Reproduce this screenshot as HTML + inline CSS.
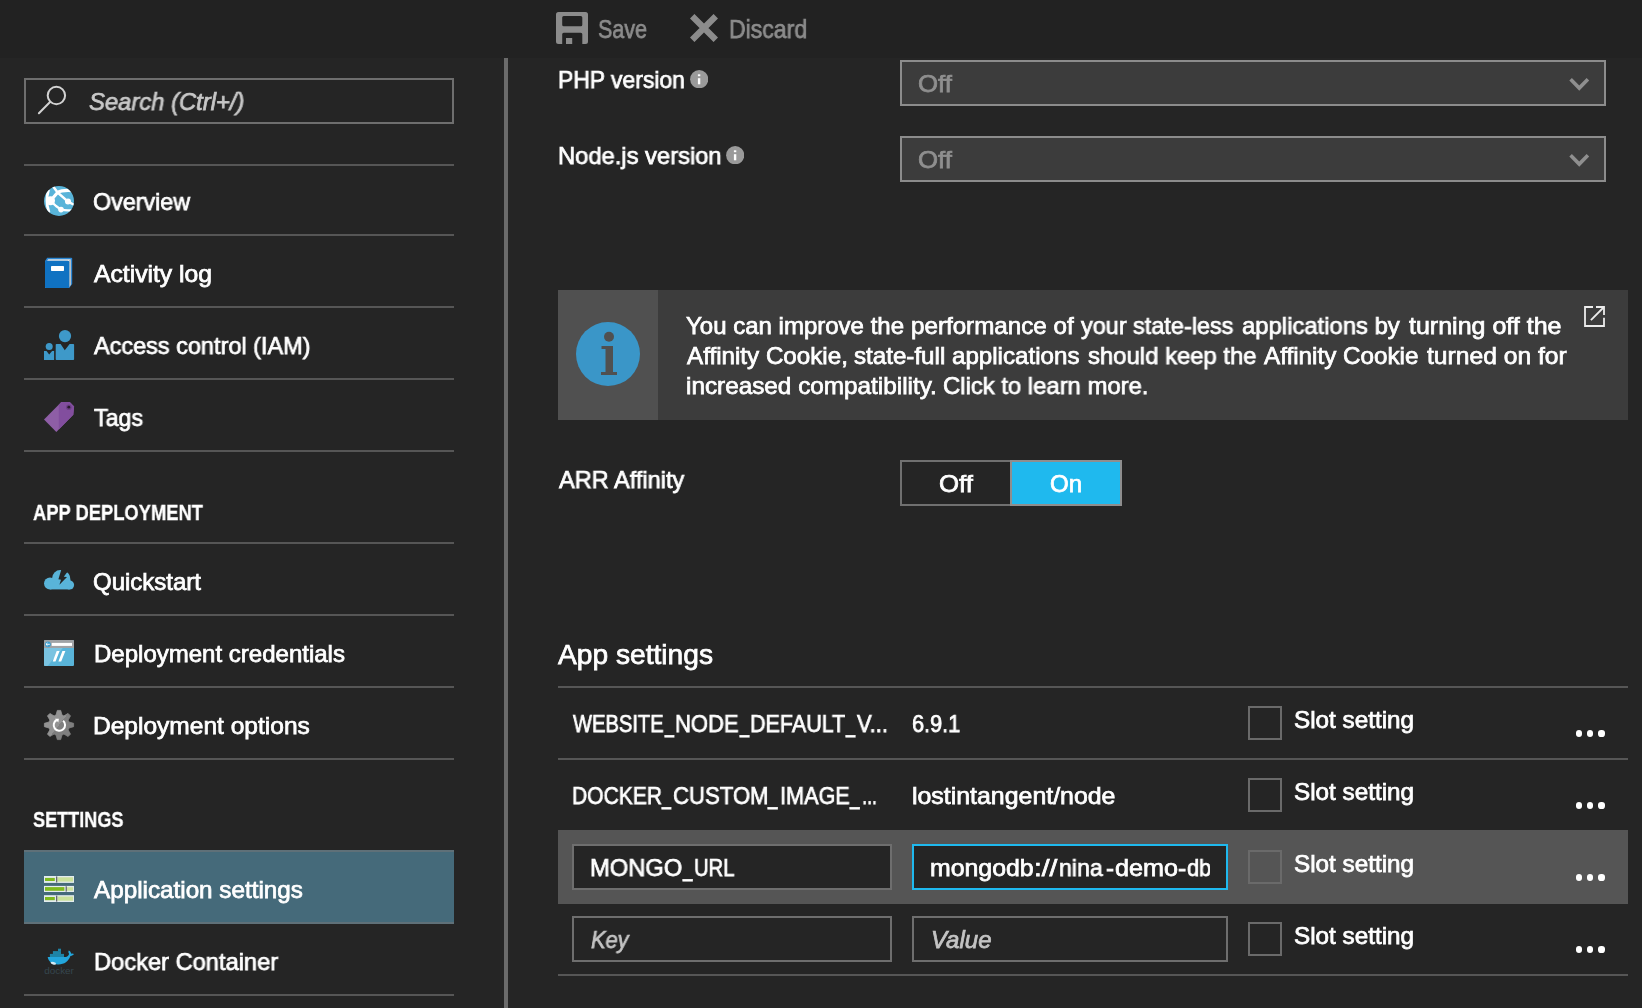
<!DOCTYPE html>
<html lang="en">
<head>
<meta charset="utf-8">
<title>Application settings</title>
<style>
*{box-sizing:border-box;margin:0;padding:0}
html,body{width:1642px;height:1008px;overflow:hidden;background:#252525}
body{position:relative;font-family:"Liberation Sans",sans-serif;color:#fff}
.abs,.t,.sep,.box,svg{position:absolute}
.t{white-space:nowrap;transform-origin:0 50%;display:block;will-change:transform;-webkit-text-stroke:.75px}
.t.i{font-style:italic}
.t.b{font-weight:bold;-webkit-text-stroke:.3px}
.sep{height:2px;background:#565656}
#topbar{left:0;top:0;width:1642px;height:58px;background:#222222}
#vdiv{left:504px;top:58px;width:4px;height:950px;background:#6b6b6b}
.side .sep{left:24px;width:430px}
.main .sep{left:558px;width:1070px}
#search{left:24px;top:78px;width:430px;height:46px;border:2px solid #6e6e6e}
#selected{left:24px;top:850px;width:430px;height:74px;background:#456a7a;border-top:2px solid #5f7078;border-bottom:2px solid #5f7078}
.dd{left:900px;width:706px;height:46px;background:#3c3c3c;border:2px solid #8c8c8c}
#info{left:558px;top:290px;width:1070px;height:130px;background:#3c3c3c}
#infoicon{left:558px;top:290px;width:100px;height:130px;background:#505050}
#tog-off{left:900px;top:460px;width:112px;height:46px;border:2px solid #707070;background:#252525}
#tog-on{left:1010px;top:460px;width:112px;height:46px;border:2px solid #8e8e8e;background:#1fb9ee}
#hl{left:558px;top:830px;width:1070px;height:74px;background:#555555}
.inp{height:46px;border:2px solid #6e6e6e;background:#252525}
.inp.k{left:572px;width:320px}
.inp.v{left:912px;width:316px}
.inp.f{border-color:#1fb9ee}
.cb{left:1248px;width:34px;height:34px;border:2px solid #6a6a6a}
.dots{width:6.200px;height:6.200px;border-radius:50%;background:#fff}
</style>
</head>
<body>

<!-- ===== command bar ===== -->
<div id="topbar" class="abs"></div>
<svg style="left:556px;top:12px" width="32" height="32" viewBox="556 12 32 32"><path fill="#8c8c8c" fill-rule="evenodd" d="M558.5 12h27a2.500 2.500 0 0 1 2.500 2.500v27a2.500 2.500 0 0 1-2.500 2.500h-3.200V34.300a1.500 1.500 0 0 0-1.500-1.500h-17.100a1.500 1.500 0 0 0-1.500 1.500V44H558.500a2.500 2.500 0 0 1-2.500-2.500v-27a2.500 2.500 0 0 1 2.500-2.500zM563.700 16h17.100a1.500 1.500 0 0 1 1.500 1.500v7.300a1.500 1.500 0 0 1-1.500 1.500h-17.100a1.500 1.500 0 0 1-1.500-1.500v-7.300a1.500 1.500 0 0 1 1.500-1.500z"/><rect x="566" y="38" width="6.200" height="6" fill="#8c8c8c"/></svg>
<span class="t" style="left:598.04px;top:12.99px;font-size:26px;line-height:32px;color:#8c8c8c;transform:scaleX(0.8281)">Save</span>
<svg style="left:690px;top:14px" width="28" height="28" viewBox="690 14 28 28"><path fill="none" stroke="#8c8c8c" stroke-width="6.300" d="M692.200 16.200l23.600 23.600M715.800 16.200l-23.600 23.600"/></svg>
<span class="t" style="left:728.97px;top:12.99px;font-size:26px;line-height:32px;color:#8c8c8c;transform:scaleX(0.8866)">Discard</span>

<!-- ===== resource menu (left) ===== -->
<div class="side">
  <div id="search" class="abs"></div>
  <svg style="left:36px;top:84px" width="32" height="32" viewBox="36 84 32 32" fill="none" stroke="#d2d2d2" stroke-width="2"><circle cx="56.400" cy="95.500" r="8.700"/><path d="M50.300 101.700L38.900 113.200" stroke-linecap="round"/></svg>
  <span class="t i" style="left:88.95px;top:86.68px;font-size:24px;line-height:30px;color:#c8c8c8;transform:scaleX(0.9914)">Search (Ctrl+/)</span>

  <div class="sep" style="top:164px"></div>
  <svg style="left:44px;top:186px" width="30" height="30" viewBox="44 186 30 30"><defs><clipPath id="gc"><circle cx="59" cy="201" r="15"/></clipPath></defs><circle cx="59" cy="201" r="15" fill="#59b4d9"/><g clip-path="url(#gc)" fill="none" stroke="#fff" stroke-linecap="round" stroke-linejoin="round"><path stroke-width="2.400" d="M52.800 186l4.800 6.500L68 201.600l6.500 3.400"/><path stroke-width="3.200" d="M50.500 200.800l7.100-8.300c3-1.700 7.500-2.400 14.400-1.900"/><path stroke-width="2.400" d="M50.500 200.800l5.500 5.200 5 3.600c3 .8 7 1 12 .5"/><path stroke-width="2.800" d="M48.400 190.300Q45.300 201 48.800 211.700"/><g fill="#fff" stroke="none"><circle cx="50.500" cy="200.800" r="4.500"/><circle cx="68" cy="201.600" r="3"/><circle cx="61" cy="209.600" r="2.800"/></g></g></svg>
  <span class="t" style="left:93.47px;top:186.68px;font-size:24px;line-height:30px;color:#ffffff;transform:scaleX(0.9704)">Overview</span>
  <div class="sep" style="top:234px"></div>
  <svg style="left:44px;top:257px" width="30" height="32" viewBox="44 257 30 32"><path fill="#2a86d4" d="M47.200 257.800h24a1 1 0 0 1 1 1v25.200l-3 4.100H45v-27z"/><path fill="#e4e4e4" d="M47 261l1.200-1.800h22.700L69.200 261z"/><path fill="#c6c6c6" d="M69.200 261l1.700-1.800v25.600l-1.700 2.400z"/><rect x="45" y="260.800" width="24.200" height="27.300" rx="1.600" fill="#1072c2"/><rect x="51" y="266" width="13" height="5" rx=".7" fill="#fff"/></svg>
  <span class="t" style="left:94.27px;top:258.68px;font-size:24px;line-height:30px;color:#ffffff;transform:scaleX(1.0289)">Activity log</span>
  <div class="sep" style="top:306px"></div>
  <svg style="left:44px;top:329px" width="31" height="32" viewBox="44 329 31 32" fill="#3e99c9"><circle cx="65" cy="336.100" r="6.150"/><path d="M56.500 344h4.100l4.200 6.200 4.800-6.200h3.700a.8.8 0 0 1 .8.800v14.500a.8.8 0 0 1-.8.800H56.500a.8.8 0 0 1-.8-.8V344.800a.8.8 0 0 1 .8-.8z"/><circle cx="49.200" cy="346.400" r="3.500"/><path d="M44 351h2.500l2.700 3.600 2.900-3.600h2v9.100H44z"/></svg>
  <span class="t" style="left:94.27px;top:330.68px;font-size:24px;line-height:30px;color:#ffffff;transform:scaleX(0.9775)">Access control (IAM)</span>
  <div class="sep" style="top:378px"></div>
  <svg style="left:44px;top:401px" width="31" height="32" viewBox="44 401 31 32"><path fill="#8e5ea6" d="M44 419.600L61.400 402.100h8.350l4.350 4.400-.8 8.200-17 17.200z"/><path fill="#824e9e" d="M58.800 404.700l2.600-2.600h8.350l4.350 4.400-.8 8.200-14.500 14.700z"/><circle cx="68.800" cy="407.200" r="2.800" fill="#6e4088"/><circle cx="68.800" cy="407.200" r="1.400" fill="#2a1a2e"/></svg>
  <span class="t" style="left:93.93px;top:402.68px;font-size:24px;line-height:30px;color:#ffffff;transform:scaleX(0.9669)">Tags</span>
  <div class="sep" style="top:450px"></div>

  <span class="t b" style="left:33.18px;top:498.88px;font-size:22px;line-height:28px;color:#ffffff;transform:scaleX(0.8340)">APP DEPLOYMENT</span>
  <div class="sep" style="top:542px"></div>
  <svg style="left:44px;top:568px" width="31" height="23" viewBox="44 568 31 23"><g fill="#59b4d9"><circle cx="50" cy="583.400" r="6"/><circle cx="60.300" cy="578.300" r="8.200"/><circle cx="69.600" cy="585" r="4.500"/><rect x="50" y="583" width="19.600" height="6.400"/><path d="M66.900 572.300c1.500 1 2.600 2.400 3 4.200l.9 5.500-10.800 4 3-9z"/></g><path fill="#252525" d="M61.500 569l-3.100 10.250 2.600.4-1.600 5.150 7.600-7.700-3.200-.4 3.100-4.300V569z"/></svg>
  <span class="t" style="left:93.40px;top:566.68px;font-size:24px;line-height:30px;color:#ffffff;transform:scaleX(0.9985)">Quickstart</span>
  <div class="sep" style="top:614px"></div>
  <svg style="left:44px;top:640px" width="30.100" height="26" viewBox="44 640 30.100 26"><rect x="44" y="640" width="30.100" height="26" rx="1.200" fill="#59b4d9"/><path d="M44 648h18.800L47.500 666h-2.300a1.200 1.200 0 0 1-1.200-1.200z" fill="#7ac3e1"/><path d="M45.200 640h27.700a1.200 1.200 0 0 1 1.200 1.200V648H44v-6.800a1.200 1.200 0 0 1 1.200-1.200z" fill="#a0a3a6"/><rect x="51.700" y="642.900" width="20.300" height="3" fill="#fff"/><circle cx="47.900" cy="644.300" r="2.900" fill="#3e9fd0"/><path d="M46 644.300h3.800M47.500 642.900l-1.500 1.400 1.500 1.400" stroke="#fff" stroke-width=".9" fill="none"/><path d="M52.700 661.400h2.800l4.100-10.400h-2.900zM58.400 661.400h2.800l4.200-10.400h-3z" fill="#fff"/></svg>
  <span class="t" style="left:93.51px;top:638.68px;font-size:24px;line-height:30px;color:#ffffff;transform:scaleX(1.0007)">Deployment credentials</span>
  <div class="sep" style="top:686px"></div>
  <svg style="left:43px;top:709px" width="32" height="32" viewBox="43 709 32 32"><defs><linearGradient id="gg" gradientUnits="userSpaceOnUse" x1="51.500" y1="718.400" x2="67.300" y2="730.600"><stop offset=".5" stop-color="#939393"/><stop offset=".5" stop-color="#7f7f7f"/></linearGradient></defs><g fill="url(#gg)"><path stroke="url(#gg)" stroke-width=".8" stroke-linejoin="round" d="M56.00 715.10L57.30 710.40L60.70 710.40L62.00 715.10L63.88 715.88L68.12 713.47L70.53 715.88L68.12 720.12L68.90 722.00L73.60 723.30L73.60 726.70L68.90 728.00L68.12 729.88L70.53 734.12L68.12 736.53L63.88 734.12L62.00 734.90L60.70 739.60L57.30 739.60L56.00 734.90L54.12 734.12L49.88 736.53L47.47 734.12L49.88 729.88L49.10 728.00L44.40 726.70L44.40 723.30L49.10 722.00L49.88 720.12L47.47 715.88L49.88 713.47L54.12 715.88z"/><circle cx="59" cy="725" r="10"/></g><path d="M63.100 720.700a5.700 5.700 0 1 1-6.400-.7" fill="none" stroke="#fff" stroke-width="2"/><path d="M55 718.800l3.900-.1-.6 3.800z" fill="#fff"/></svg>
  <span class="t" style="left:93.49px;top:710.68px;font-size:24px;line-height:30px;color:#ffffff;transform:scaleX(1.0222)">Deployment options</span>
  <div class="sep" style="top:758px"></div>

  <span class="t b" style="left:33.10px;top:806.38px;font-size:22px;line-height:28px;color:#ffffff;transform:scaleX(0.8227)">SETTINGS</span>
  <div id="selected" class="abs"></div>
  <svg style="left:44px;top:876px" width="30.100" height="26" viewBox="44 876 30.100 26"><rect x="44" y="876" width="30.100" height="6.9" fill="#e3ecef"/><rect x="45" y="877.9" width="9.8" height="3.1" fill="#7fba1e"/><rect x="57.4" y="877.3" width="15.7" height="4.3" fill="#cbe29b"/><rect x="56.0" y="876.4" width="1.300" height="6.1" fill="#66696b"/><rect x="44" y="885.9" width="30.100" height="6.1" fill="#e3ecef"/><rect x="45" y="887.1" width="19.4" height="3.7" fill="#7fba1e"/><rect x="67.0" y="887.2" width="6.1" height="3.5" fill="#cbe29b"/><rect x="65.6" y="886.3" width="1.300" height="5.3" fill="#66696b"/><rect x="44" y="895.2" width="30.100" height="6.8" fill="#e3ecef"/><rect x="45" y="897.0" width="9.8" height="3.2" fill="#7fba1e"/><rect x="57.4" y="896.5" width="15.7" height="4.2" fill="#cbe29b"/><rect x="56.0" y="895.6" width="1.300" height="6.0" fill="#66696b"/></svg>
  <span class="t" style="left:94.28px;top:874.68px;font-size:24px;line-height:30px;color:#ffffff;transform:scaleX(1.0101)">Application settings</span>
  <svg style="left:43px;top:947px" width="32" height="28" viewBox="43 947 32 28"><g fill="#1e84a6"><rect x="49.900" y="953.900" width="14.100" height="3.200"/><rect x="52.900" y="951.100" width="8.100" height="3"/><rect x="58" y="948.700" width="3" height="2.600"/></g><path fill="#23a6dc" d="M47.700 956.900h18.300c1.700-.3 2.900-1.500 3.100-3.100-.8-1-.9-2.300-.3-3.400 1.300.6 2.200 1.900 2.300 3.300 1.200-.3 2.200-.1 2.900.4-.8 1.300-2.100 1.900-3.600 1.800-1.900 5.400-6 8.300-11.900 8.500-6 .2-10.300-3-10.800-7.500z"/><ellipse cx="53.300" cy="963.300" rx="2.800" ry="1.300" fill="#d4ecf6" transform="rotate(14 53.300 963.300)"/><text x="44.200" y="973.500" font-family="Liberation Sans,sans-serif" font-size="9.500" textLength="29.700" lengthAdjust="spacingAndGlyphs" fill="#35454e">docker</text></svg>
  <span class="t" style="left:94.03px;top:946.68px;font-size:24px;line-height:30px;color:#ffffff;transform:scaleX(0.9860)">Docker Container</span>
  <div class="sep" style="top:994px"></div>
</div>

<div id="vdiv" class="abs"></div>

<!-- ===== blade content (right) ===== -->
<div class="main">
  <span class="t" style="left:557.56px;top:64.68px;font-size:24px;line-height:30px;color:#ffffff;transform:scaleX(0.9545)">PHP version</span>
  <svg style="left:689.9px;top:69.8px" width="18.400" height="18.400" viewBox="0 0 18.400 18.400"><circle cx="9.200" cy="9.200" r="9.100" fill="#9a9a9a"/><rect x="7.900" y="4.300" width="2.400" height="1.900" fill="#fff"/><rect x="7.900" y="8.200" width="2.400" height="6.100" fill="#fff"/></svg>
  <div class="dd abs" style="top:60px"></div>
  <span class="t" style="left:917.72px;top:68.68px;font-size:24px;line-height:30px;color:#8f8f8f;transform:scaleX(1.0737)">Off</span>
  <svg style="left:1566px;top:74px" width="26" height="20" viewBox="1566 74 26 20"><path d="M1570.600 79.300l8.650 8.800 8.650-8.800" fill="none" stroke="#8f8f8f" stroke-width="3.600"/></svg>

  <span class="t" style="left:557.53px;top:140.68px;font-size:24px;line-height:30px;color:#ffffff;transform:scaleX(0.9886)">Node.js version</span>
  <svg style="left:725.9px;top:145.8px" width="18.400" height="18.400" viewBox="0 0 18.400 18.400"><circle cx="9.200" cy="9.200" r="9.100" fill="#9a9a9a"/><rect x="7.900" y="4.300" width="2.400" height="1.900" fill="#fff"/><rect x="7.900" y="8.200" width="2.400" height="6.100" fill="#fff"/></svg>
  <div class="dd abs" style="top:136px"></div>
  <span class="t" style="left:917.72px;top:144.68px;font-size:24px;line-height:30px;color:#8f8f8f;transform:scaleX(1.0737)">Off</span>
  <svg style="left:1566px;top:150px" width="26" height="20" viewBox="1566 74 26 20"><path d="M1570.600 79.300l8.650 8.800 8.650-8.800" fill="none" stroke="#8f8f8f" stroke-width="3.600"/></svg>

  <div id="info" class="abs"></div>
  <div id="infoicon" class="abs"></div>
  <svg style="left:576px;top:322px" width="64" height="64" viewBox="576 322 64 64"><circle cx="608" cy="354" r="32" fill="#3a96c8"/><circle cx="609" cy="336.750" r="5" fill="#505050"/><path d="M601.500 346H613v26h4v3h-16v-3h4.500v-23h-4z" fill="#505050"/></svg>
  <span class="t" style="left:686.11px;top:310.68px;font-size:24px;line-height:30px;color:#ffffff;transform:scaleX(1.0004)">You can improve the</span><span class="t" style="left:910.87px;top:310.68px;font-size:24px;line-height:30px;color:#ffffff;transform:scaleX(1.0074)">performance of</span><span class="t" style="left:1081.37px;top:310.68px;font-size:24px;line-height:30px;color:#ffffff;transform:scaleX(0.9765)">your state-less</span><span class="t" style="left:1242.35px;top:310.68px;font-size:24px;line-height:30px;color:#ffffff;transform:scaleX(0.9932)">applications by</span><span class="t" style="left:1408.84px;top:310.68px;font-size:24px;line-height:30px;color:#ffffff;transform:scaleX(1.0422)">turning off the</span>
  <span class="t" style="left:686.52px;top:340.68px;font-size:24px;line-height:30px;color:#ffffff;transform:scaleX(1.0081)">Affinity Cookie,</span><span class="t" style="left:853.56px;top:340.68px;font-size:24px;line-height:30px;color:#ffffff;transform:scaleX(1.0060)">state-full applications</span><span class="t" style="left:1088.06px;top:340.68px;font-size:24px;line-height:30px;color:#ffffff;transform:scaleX(0.9947)">should keep the</span><span class="t" style="left:1263.78px;top:340.68px;font-size:24px;line-height:30px;color:#ffffff;transform:scaleX(1.0091)">Affinity Cookie</span><span class="t" style="left:1426.54px;top:340.68px;font-size:24px;line-height:30px;color:#ffffff;transform:scaleX(1.0263)">turned on for</span>
  <span class="t" style="left:685.57px;top:370.68px;font-size:24px;line-height:30px;color:#ffffff;transform:scaleX(1.0126)">increased compatibility.</span><span class="t" style="left:942.53px;top:370.68px;font-size:24px;line-height:30px;color:#ffffff;transform:scaleX(0.9936)">Click to learn more.</span>
  <svg style="left:1583px;top:305px" width="23" height="23" viewBox="1583 305 23 23" fill="none" stroke="#ececec" stroke-width="1.800"><path d="M1593 307h-8v19h19v-8.200"/><path d="M1596 307h8v8"/><path d="M1604 307l-13.100 13.100"/></svg>

  <span class="t" style="left:558.53px;top:464.68px;font-size:24px;line-height:30px;color:#ffffff;transform:scaleX(0.9819)">ARR Affinity</span>
  <div id="tog-off" class="abs"></div>
  <div id="tog-on" class="abs"></div>
  <span class="t" style="left:939.46px;top:468.68px;font-size:24px;line-height:30px;color:#ffffff;transform:scaleX(1.0737)">Off</span>
  <span class="t" style="left:1049.89px;top:468.68px;font-size:24px;line-height:30px;color:#ffffff;transform:scaleX(0.9976)">On</span>

  <span class="t" style="left:558.48px;top:636.80px;font-size:28px;line-height:35px;color:#ffffff;transform:scaleX(1.0058)">App settings</span>
  <div class="sep" style="top:686px"></div>
  <span class="t" style="left:572.53px;top:708.68px;font-size:24px;line-height:30px;color:#ffffff;transform:scaleX(0.8386)">WEBSITE</span><span class="t" style="left:664.89px;top:708.68px;font-size:24px;line-height:30px;color:#ffffff;transform:scaleX(0.6743)">_</span><span class="t" style="left:674.61px;top:708.68px;font-size:24px;line-height:30px;color:#ffffff;transform:scaleX(0.9177)">NODE</span><span class="t" style="left:739.88px;top:708.68px;font-size:24px;line-height:30px;color:#ffffff;transform:scaleX(0.6828)">_</span><span class="t" style="left:749.87px;top:708.68px;font-size:24px;line-height:30px;color:#ffffff;transform:scaleX(0.8966)">DEFAULT</span><span class="t" style="left:846.36px;top:708.68px;font-size:24px;line-height:30px;color:#ffffff;transform:scaleX(0.6828)">_</span><span class="t" style="left:856.93px;top:708.68px;font-size:24px;line-height:30px;color:#ffffff;transform:scaleX(0.9136)">V...</span>
  <span class="t" style="left:912.27px;top:708.68px;font-size:24px;line-height:30px;color:#ffffff;transform:scaleX(0.9039)">6.9.1</span>
  <div class="cb abs" style="top:706px"></div>
  <span class="t" style="left:1293.93px;top:704.68px;font-size:24px;line-height:30px;color:#ffffff;transform:scaleX(1.0107)">Slot setting</span>
  <div class="dots abs" style="left:1575.700px;top:730.4px"></div><div class="dots abs" style="left:1586.900px;top:730.4px"></div><div class="dots abs" style="left:1598.400px;top:730.4px"></div>

  <div class="sep" style="top:758px"></div>
  <span class="t" style="left:571.79px;top:780.68px;font-size:24px;line-height:30px;color:#ffffff;transform:scaleX(0.8773)">DOCKER</span><span class="t" style="left:662.49px;top:780.68px;font-size:24px;line-height:30px;color:#ffffff;transform:scaleX(0.6743)">_</span><span class="t" style="left:672.94px;top:780.68px;font-size:24px;line-height:30px;color:#ffffff;transform:scaleX(0.9221)">CUSTOM</span><span class="t" style="left:768.07px;top:780.68px;font-size:24px;line-height:30px;color:#ffffff;transform:scaleX(0.6945)">_</span><span class="t" style="left:779.99px;top:780.68px;font-size:24px;line-height:30px;color:#ffffff;transform:scaleX(0.9018)">IMAGE</span><span class="t" style="left:850.26px;top:780.68px;font-size:24px;line-height:30px;color:#ffffff;transform:scaleX(0.6979)">_</span><span class="t" style="left:862.44px;top:780.68px;font-size:24px;line-height:30px;color:#ffffff;transform:scaleX(0.7520)">...</span>
  <span class="t" style="left:911.54px;top:780.68px;font-size:24px;line-height:30px;color:#ffffff;transform:scaleX(1.0372)">lostintangent/node</span>
  <div class="cb abs" style="top:778px"></div>
  <span class="t" style="left:1293.93px;top:776.68px;font-size:24px;line-height:30px;color:#ffffff;transform:scaleX(1.0107)">Slot setting</span>
  <div class="dots abs" style="left:1575.700px;top:802.4px"></div><div class="dots abs" style="left:1586.900px;top:802.4px"></div><div class="dots abs" style="left:1598.400px;top:802.4px"></div>

  <div id="hl" class="abs"></div>
  <div class="inp k abs" style="top:844px"></div>
  <span class="t" style="left:590.13px;top:852.68px;font-size:24px;line-height:30px;color:#ffffff;transform:scaleX(0.9877)">MONGO</span><span class="t" style="left:682.90px;top:852.68px;font-size:24px;line-height:30px;color:#ffffff;transform:scaleX(0.6945)">_</span><span class="t" style="left:694.04px;top:852.68px;font-size:24px;line-height:30px;color:#ffffff;transform:scaleX(0.8424)">URL</span>
  <div class="inp v f abs" style="top:844px"><div class="abs" style="left:0;top:0;width:296px;height:42px;overflow:hidden"><div class="abs" style="left:-914px;top:-846px;width:1642px;height:1008px"><span class="t" style="left:930.14px;top:852.68px;font-size:24px;line-height:30px;color:#ffffff;transform:scaleX(1.0354)">mongodb</span><span class="t" style="left:1033.61px;top:852.68px;font-size:24px;line-height:30px;color:#ffffff;transform:scaleX(1.1671)">://</span><span class="t" style="left:1059.07px;top:852.68px;font-size:24px;line-height:30px;color:#ffffff;transform:scaleX(0.9637)">nina</span><span class="t" style="left:1105.71px;top:852.68px;font-size:24px;line-height:30px;color:#ffffff;transform:scaleX(1.0047)">-</span><span class="t" style="left:1114.76px;top:852.68px;font-size:24px;line-height:30px;color:#ffffff;transform:scaleX(1.0489)">demo</span><span class="t" style="left:1178.34px;top:852.68px;font-size:24px;line-height:30px;color:#ffffff;transform:scaleX(1.0274)">-</span><span class="t" style="left:1187.05px;top:852.68px;font-size:24px;line-height:30px;color:#ffffff;transform:scaleX(0.9106)">db</span></div></div></div>
  <div class="cb abs" style="top:850px"></div>
  <span class="t" style="left:1293.93px;top:848.68px;font-size:24px;line-height:30px;color:#ffffff;transform:scaleX(1.0107)">Slot setting</span>
  <div class="dots abs" style="left:1575.700px;top:874.4px"></div><div class="dots abs" style="left:1586.900px;top:874.4px"></div><div class="dots abs" style="left:1598.400px;top:874.4px"></div>

  <div class="inp k abs" style="top:916px"></div>
  <span class="t i" style="left:590.81px;top:924.68px;font-size:24px;line-height:30px;color:#c4c4c4;transform:scaleX(0.9088)">Key</span>
  <div class="inp v abs" style="top:916px"></div>
  <span class="t i" style="left:931.19px;top:924.68px;font-size:24px;line-height:30px;color:#c4c4c4;transform:scaleX(0.9921)">Value</span>
  <div class="cb abs" style="top:922px"></div>
  <span class="t" style="left:1293.93px;top:920.68px;font-size:24px;line-height:30px;color:#ffffff;transform:scaleX(1.0107)">Slot setting</span>
  <div class="dots abs" style="left:1575.700px;top:946.4px"></div><div class="dots abs" style="left:1586.900px;top:946.4px"></div><div class="dots abs" style="left:1598.400px;top:946.4px"></div>
  <div class="sep" style="top:974px"></div>
</div>

</body>
</html>
